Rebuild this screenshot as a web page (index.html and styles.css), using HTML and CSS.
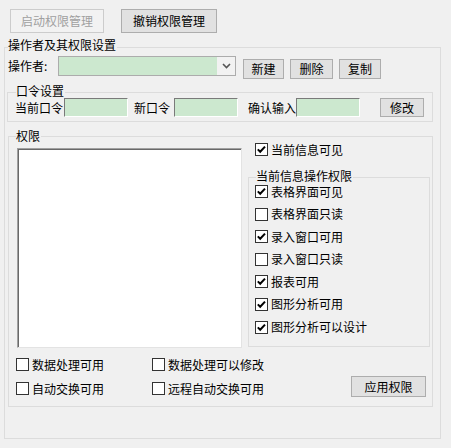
FILE: index.html
```html
<!DOCTYPE html>
<html lang="zh-CN">
<head>
<meta charset="utf-8">
<title>权限管理</title>
<link rel="stylesheet" href="styles.css">
</head>
<body>
<div class="window">
  <div class="topbar">
    <button class="btn btn-top btn-disabled" disabled>启动权限管理</button>
    <button class="btn btn-top btn-top2">撤销权限管理</button>
  </div>

  <div class="group group-outer">
    <div class="legend legend-outer">操作者及其权限设置</div>
    <div class="operator-row">
      <span class="lbl-operator">操作者:</span>
      <div class="combo">
        <div class="combo-field"></div>
        <div class="combo-arrow">
          <svg width="9" height="6" viewBox="0 0 9 6"><polyline points="1,1 4.5,4.5 8,1" fill="none" stroke="#555" stroke-width="1.6"/></svg>
        </div>
      </div>
      <button class="btn btn-small btn-new">新建</button>
      <button class="btn btn-small btn-del">删除</button>
      <button class="btn btn-small btn-copy">复制</button>
    </div>

    <div class="group group-pwd">
      <div class="legend legend-pwd">口令设置</div>
      <div class="pwd-row">
        <span class="pw-lbl pw-lbl1">当前口令</span>
        <div class="input"></div>
        <span class="pw-lbl pw-lbl2">新口令</span>
        <div class="input"></div>
        <span class="pw-lbl pw-lbl3">确认输入</span>
        <div class="input"></div>
        <button class="btn btn-modify">修改</button>
      </div>
    </div>

    <div class="group group-perm">
      <div class="legend legend-perm">权限</div>
      <div class="perm-main">
        <div class="listbox"></div>
        <div class="right-col">
          <label class="cb-row cb-top"><span class="cb checked"><svg width="11" height="11" viewBox="0 0 11 11"><polyline points="1.8,5.4 4.2,7.8 9,2.6" fill="none" stroke="#000" stroke-width="2"/></svg></span><span>当前信息可见</span></label>
          <div class="group group-sub">
            <div class="legend legend-sub">当前信息操作权限</div>
            <div class="sub-list">
              <label class="cb-row"><span class="cb checked"><svg width="11" height="11" viewBox="0 0 11 11"><polyline points="1.8,5.4 4.2,7.8 9,2.6" fill="none" stroke="#000" stroke-width="2"/></svg></span><span>表格界面可见</span></label>
              <label class="cb-row"><span class="cb"></span><span>表格界面只读</span></label>
              <label class="cb-row"><span class="cb checked"><svg width="11" height="11" viewBox="0 0 11 11"><polyline points="1.8,5.4 4.2,7.8 9,2.6" fill="none" stroke="#000" stroke-width="2"/></svg></span><span>录入窗口可用</span></label>
              <label class="cb-row"><span class="cb"></span><span>录入窗口只读</span></label>
              <label class="cb-row"><span class="cb checked"><svg width="11" height="11" viewBox="0 0 11 11"><polyline points="1.8,5.4 4.2,7.8 9,2.6" fill="none" stroke="#000" stroke-width="2"/></svg></span><span>报表可用</span></label>
              <label class="cb-row"><span class="cb checked"><svg width="11" height="11" viewBox="0 0 11 11"><polyline points="1.8,5.4 4.2,7.8 9,2.6" fill="none" stroke="#000" stroke-width="2"/></svg></span><span>图形分析可用</span></label>
              <label class="cb-row"><span class="cb checked"><svg width="11" height="11" viewBox="0 0 11 11"><polyline points="1.8,5.4 4.2,7.8 9,2.6" fill="none" stroke="#000" stroke-width="2"/></svg></span><span>图形分析可以设计</span></label>
            </div>
          </div>
        </div>
      </div>
      <div class="perm-bottom">
        <div class="cb-grid">
          <label class="cb-row"><span class="cb"></span><span>数据处理可用</span></label>
          <label class="cb-row"><span class="cb"></span><span>数据处理可以修改</span></label>
          <label class="cb-row"><span class="cb"></span><span>自动交换可用</span></label>
          <label class="cb-row"><span class="cb"></span><span>远程自动交换可用</span></label>
        </div>
        <button class="btn btn-apply">应用权限</button>
      </div>
    </div>
  </div>
</div>
</body>
</html>
```

FILE: styles.css
```css
* {
  box-sizing: border-box;
}

body {
  margin: 0;
  width: 451px;
  height: 448px;
  overflow: hidden;
  background: #f0f0f0;
  color: #000;
  font-family: "Noto Sans CJK SC", "Noto Sans", sans-serif;
  font-size: 12px;
  line-height: 14px;
}

.window {
  width: 451px;
  height: 448px;
}

/* buttons */
.btn {
  font-family: inherit;
  font-size: 12px;
  line-height: 14px;
  padding: 0;
  margin: 0;
  border: 1px solid #adadad;
  background: #e1e1e1;
  color: #000;
  display: flex;
  align-items: center;
  justify-content: center;
}

.topbar {
  display: flex;
  gap: 17px;
  padding: 9px 0 0 10px;
}

.btn-top {
  width: 94px;
  height: 24px;
}

.btn-top2 {
  width: 96px;
}

.btn-disabled {
  border-color: #cccccc;
  background: #f2f2f2;
  color: #a0a0a0;
}

/* group boxes */
.group {
  border: 1px solid #dcdcdc;
}

.legend {
  width: fit-content;
  background: #f0f0f0;
  line-height: 14px;
  padding-right: 1px;
}

.group-outer {
  margin: 14px 0 0 4px;
  width: 437px;
  padding-bottom: 31px;
}

.legend-outer {
  margin: -10px 0 0 3px;
}

/* operator row */
.operator-row {
  display: flex;
  align-items: flex-start;
  margin-top: 4px;
}

.lbl-operator {
  width: 53px;
  padding-left: 3px;
  line-height: 20px;
}

.combo {
  width: 178px;
  height: 20px;
  border: 1px solid #acacac;
  display: flex;
}

.combo-field {
  flex: 1;
  background: #cce8cf;
}

.combo-arrow {
  width: 18px;
  background: #f2f2f2;
  display: flex;
  align-items: center;
  justify-content: center;
}

.btn-small {
  height: 20px;
  margin-top: 3px;
}

.btn-new {
  width: 41px;
  margin-left: 7px;
}

.btn-del {
  width: 43px;
  margin-left: 6px;
}

.btn-copy {
  width: 42px;
  margin-left: 6px;
}

/* password group */
.group-pwd {
  margin: 13px 0 0 2px;
  width: 426px;
  padding-bottom: 4px;
}

.legend-pwd {
  margin: -9px 0 0 8px;
}

.pwd-row {
  display: flex;
  align-items: center;
}

.pw-lbl {
  line-height: 19px;
}

.pw-lbl1 {
  margin-left: 7px;
  width: 49px;
}

.pw-lbl2 {
  margin-left: 6px;
  width: 40px;
}

.pw-lbl3 {
  margin-left: 10px;
  width: 48px;
}

.input {
  width: 64px;
  height: 19px;
  background: #cce8cf;
  border: 1px solid;
  border-color: #7a7a7a #ffffff #ffffff #7a7a7a;
}

.btn-modify {
  width: 44px;
  height: 19px;
  margin-left: 20px;
}

/* permission group */
.group-perm {
  margin: 14px 0 0 3px;
  width: 425px;
  padding-bottom: 9px;
}

.legend-perm {
  margin: -8px 0 0 7px;
}

.perm-main {
  display: flex;
  align-items: flex-start;
}

.listbox {
  margin: 5px 0 0 8px;
  width: 225px;
  height: 200px;
  background: #fff;
  border: 1px solid;
  border-color: #a0a0a0 #e3e3e3 #e3e3e3 #a0a0a0;
  box-shadow: inset 1px 1px 0 #696969;
}

.right-col {
  margin-left: 6px;
  width: 182px;
}

.cb-row {
  display: flex;
  align-items: center;
  gap: 3px;
  height: 13px;
  white-space: nowrap;
}

.cb {
  width: 13px;
  height: 13px;
  flex: none;
  background: #fff;
  border: 1px solid #333;
  display: flex;
  align-items: center;
  justify-content: center;
}

.cb-top {
  margin-left: 7px;
}

.group-sub {
  margin-top: 21px;
  width: 182px;
  height: 170px;
}

.legend-sub {
  margin: -9px 0 0 7px;
}

.sub-list {
  margin: 2px 0 0 6px;
  display: flex;
  flex-direction: column;
  gap: 9.6px;
}

.perm-bottom {
  display: flex;
  align-items: flex-start;
}

.cb-grid {
  display: grid;
  grid-template-columns: 136px auto;
  row-gap: 11px;
  margin: 10px 0 0 7px;
}

.btn-apply {
  width: 75px;
  height: 21px;
  margin: 28px 6px 0 auto;
}
```
